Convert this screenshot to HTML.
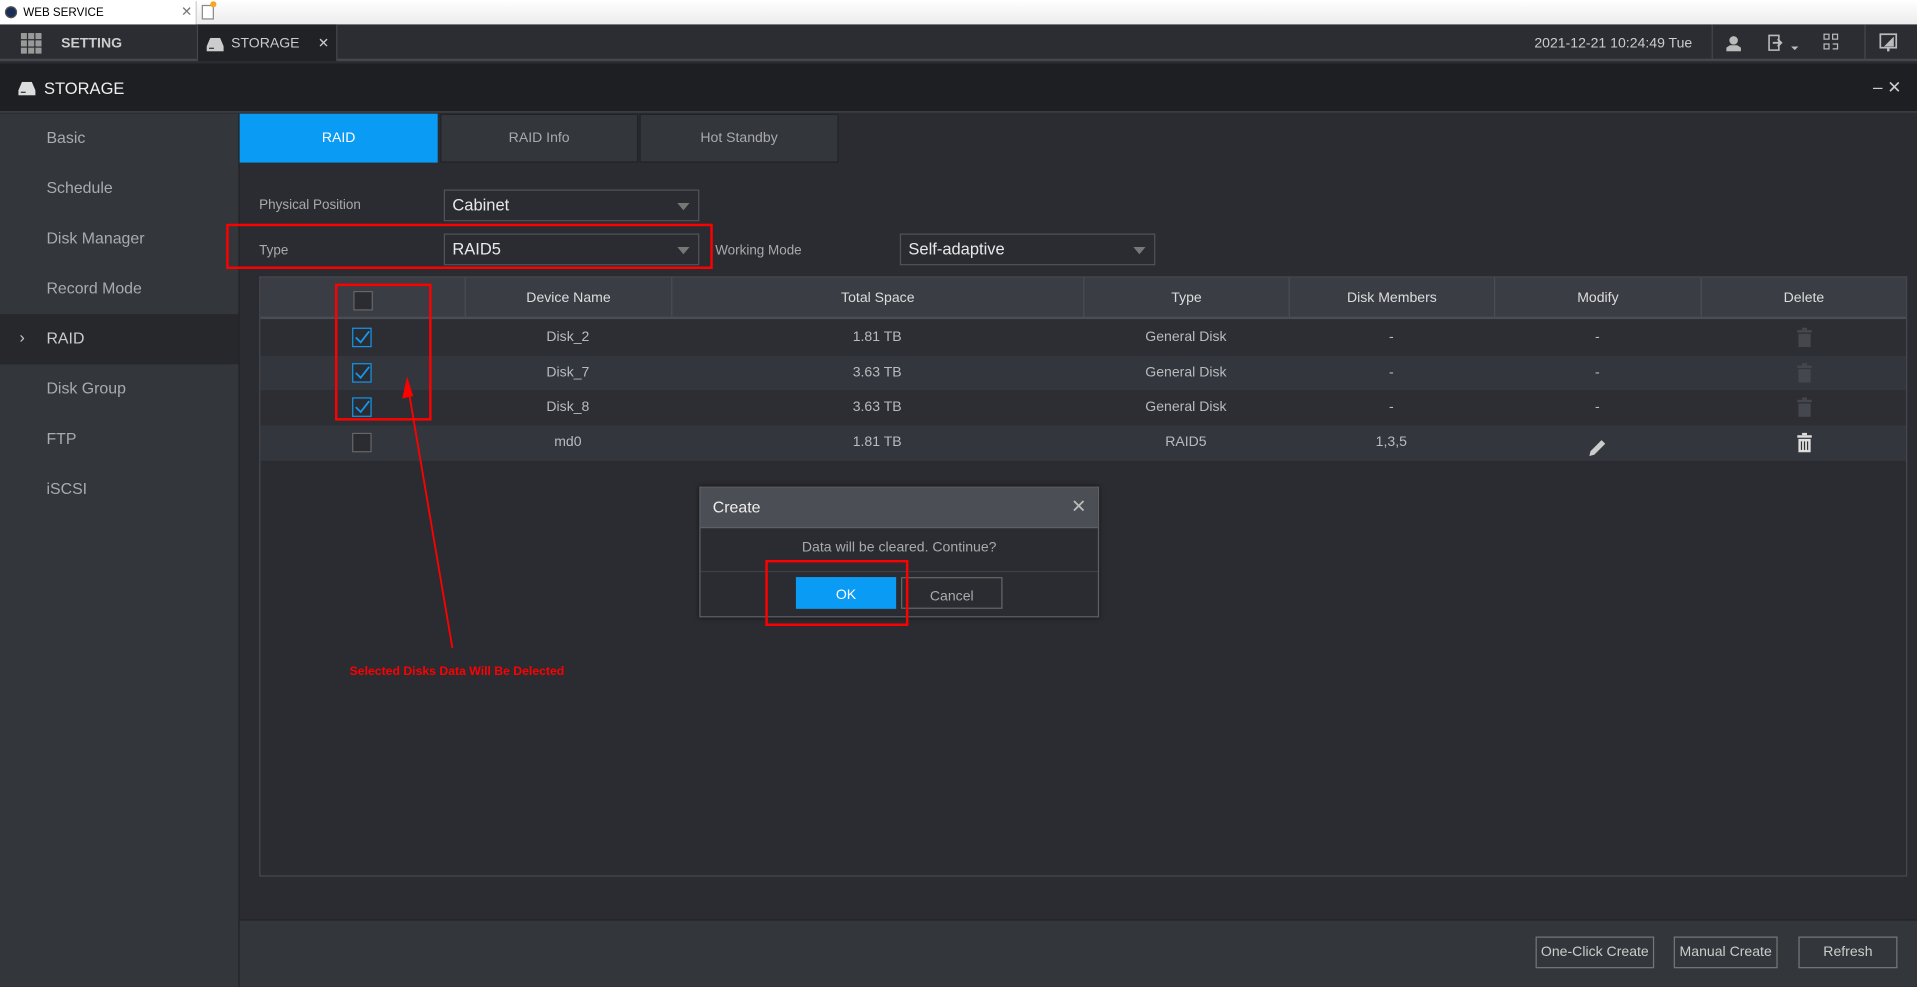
<!DOCTYPE html>
<html><head><meta charset="utf-8"><style>
*{box-sizing:border-box;margin:0;padding:0}
html,body{width:1917px;height:987px;overflow:hidden;background:#2a2c31;font-family:"Liberation Sans",Arial,sans-serif}
#s{position:absolute;left:0;top:0;width:1568px;height:807px;transform:scale(1.22258);transform-origin:0 0;background:#2a2c31;color:#bbb;font-size:12px}
.a{position:absolute}
.c{display:flex;align-items:center;justify-content:center}
.side div.it{position:absolute;left:0;width:195px;height:41px;line-height:40px;padding-left:38px;font-size:13px;color:#a9abae}
.sel{position:absolute;height:26px;border:1px solid #50535a;background:#2a2c31;color:#e8e8e8;font-size:13.5px;line-height:24px;padding-left:6px}
.sel:after{content:"";position:absolute;right:7px;top:10px;border:5px solid transparent;border-top:6px solid #777;}
.th{position:absolute;top:0;height:34px;line-height:34px;text-align:center;color:#ddd;font-size:11.5px;border-right:1px solid #4a4d54}
.td{position:absolute;height:29px;line-height:30px;text-align:center;color:#b9bbbe;font-size:11.5px}
.cb{position:absolute;width:16px;height:16px;border:1px solid #666;background:#2a2c31}
.cb.on{border-color:#1596e8}
.btn{position:absolute;height:26px;border:1px solid #777;color:#ccc;font-size:11.5px;line-height:25px;text-align:center}
</style></head><body><div id="s">
<div class="a" style="left:0;top:0;width:1568px;height:20px;background:linear-gradient(#fff,#ececec)"></div>
<div class="a" style="left:0;top:1px;width:161px;height:19px;background:#fff;border-right:1px solid #ccc"></div>
<div class="a" style="left:4px;top:5px;width:10px;height:10px;border-radius:50%;background:#1b2e55;border:1px solid #555"></div>
<div class="a" style="left:19px;top:5px;font-size:9.5px;color:#000">WEB SERVICE</div>
<div class="a" style="left:148px;top:3px;font-size:11px;color:#777">✕</div>
<div class="a" style="left:165px;top:4px;width:10px;height:12px;border:1px solid #888;background:#fff"></div>
<div class="a" style="left:172px;top:1px;width:5px;height:5px;background:#f5a623;border-radius:50%"></div>
<div class="a" style="left:0;top:20px;width:1568px;height:30px;background:#2b2d32;border-bottom:2px solid #45474c"></div>
<svg class="a" style="left:17px;top:27px" width="17" height="17"><g fill="#999"><rect x="0" y="0" width="5" height="5"/><rect x="6" y="0" width="5" height="5"/><rect x="12" y="0" width="5" height="5"/><rect x="0" y="6" width="5" height="5"/><rect x="6" y="6" width="5" height="5"/><rect x="12" y="6" width="5" height="5"/><rect x="0" y="12" width="5" height="5"/><rect x="6" y="12" width="5" height="5"/><rect x="12" y="12" width="5" height="5"/></g></svg>
<div class="a" style="left:50px;top:30px;font-size:11.5px;font-weight:bold;color:#ccc">SETTING</div>
<div class="a" style="left:161px;top:20px;width:115px;height:30px;background:#202226;border-left:1px solid #45474c;border-right:1px solid #45474c"></div>
<svg class="a" style="left:169px;top:31px" width="14" height="11"><path d="M3 0h8l3 7v4H0V7z" fill="#ccc"/><rect x="2" y="8" width="4" height="1" fill="#333"/></svg>
<div class="a" style="left:189px;top:30px;font-size:11.5px;color:#ccc">STORAGE</div>
<div class="a" style="left:260px;top:29px;font-size:11px;color:#ccc">✕</div>
<div class="a" style="left:1255px;top:30px;font-size:11.5px;color:#ccc">2021-12-21 10:24:49 Tue</div>
<div class="a" style="left:1400px;top:20px;width:1px;height:30px;background:#45474c"></div>
<div class="a" style="left:1525px;top:20px;width:1px;height:30px;background:#45474c"></div>
<svg class="a" style="left:1412px;top:29px" width="12" height="13"><circle cx="6" cy="4" r="3.5" fill="#bbb"/><path d="M0 13v-3l3-2h6l3 2v3z" fill="#bbb"/></svg>
<svg class="a" style="left:1446px;top:28px" width="26" height="14"><path d="M1 1h8v12H1z" fill="none" stroke="#bbb" stroke-width="1.3"/><path d="M4 7h6M8 4l3 3-3 3" fill="none" stroke="#bbb" stroke-width="1.5"/><path d="M19 10l3 3 3-3z" fill="#bbb"/></svg>
<svg class="a" style="left:1491px;top:27px" width="13" height="15" fill="none" stroke="#bbb"><rect x="1" y="1" width="4" height="4"/><rect x="8" y="1" width="4" height="4"/><rect x="1" y="9" width="4" height="4"/><path d="M8 9h4v4H8"/></svg>
<svg class="a" style="left:1537px;top:27px" width="16" height="16"><rect x="1" y="1" width="13" height="11" fill="none" stroke="#bbb" stroke-width="1.4"/><path d="M12 3L4 11h8z" fill="#bbb"/><rect x="6.5" y="12" width="2" height="3" fill="#bbb"/></svg>
<div class="a" style="left:0;top:52px;width:1568px;height:40px;background:#1d1f22;border-bottom:1px solid #45474c"></div>
<svg class="a" style="left:15px;top:67px" width="14" height="11"><path d="M3 0h8l3 7v4H0V7z" fill="#ddd"/><rect x="2" y="8" width="4" height="1" fill="#333"/></svg>
<div class="a" style="left:36px;top:65px;font-size:13.5px;color:#eee">STORAGE</div>
<div class="a" style="left:1532px;top:63px;font-size:14px;color:#ccc">– ✕</div>
<div class="a side" style="left:0;top:93px;width:196px;height:714px;background:#33363b;border-right:1px solid #202226">
<div class="it" style="top:0">Basic</div>
<div class="it" style="top:41px">Schedule</div>
<div class="it" style="top:82px">Disk Manager</div>
<div class="it" style="top:123px">Record Mode</div>
<div class="it" style="top:164px;background:#26282c;color:#ccc">RAID</div>
<div class="a" style="left:16px;top:175px;font-size:13px;color:#ccc">›</div>
<div class="it" style="top:205px">Disk Group</div>
<div class="it" style="top:246px">FTP</div>
<div class="it" style="top:287px">iSCSI</div>
</div>
<div class="a c" style="left:196px;top:93px;width:162px;height:40px;background:#0a9bf5;color:#fff;font-size:11.5px">RAID</div>
<div class="a c" style="left:360px;top:93px;width:162px;height:40px;background:#33363b;border:1px solid #202226;color:#aaa;font-size:11.5px">RAID Info</div>
<div class="a c" style="left:523px;top:93px;width:163px;height:40px;background:#33363b;border:1px solid #202226;color:#aaa;font-size:11.5px">Hot Standby</div>
<div class="a" style="left:212px;top:162px;font-size:11px;color:#aaa">Physical Position</div>
<div class="sel" style="left:363px;top:155px;width:209px">Cabinet</div>
<div class="a" style="left:212px;top:199px;font-size:11px;color:#aaa">Type</div>
<div class="sel" style="left:363px;top:191px;width:209px">RAID5</div>
<div class="a" style="left:585px;top:199px;font-size:11px;color:#aaa">Working Mode</div>
<div class="sel" style="left:736px;top:191px;width:209px">Self-adaptive</div>
<div class="a" style="left:212px;top:226px;width:1348px;height:491px;border:1px solid #46494f;background:#2a2c31">
<div class="a" style="left:0;top:0;width:1346px;height:34px;background:#3a3d44;border-bottom:2px solid #4a4d54"></div>
<div class="th" style="left:0;width:168px"></div>
<div class="th" style="left:168px;width:169px">Device Name</div>
<div class="th" style="left:337px;width:337px">Total Space</div>
<div class="th" style="left:674px;width:168px">Type</div>
<div class="th" style="left:842px;width:168px">Disk Members</div>
<div class="th" style="left:1010px;width:169px">Modify</div>
<div class="th" style="left:1179px;width:167px;border:0">Delete</div>
<div class="cb" style="left:76px;top:11px"></div>
<div class="a" style="left:0;top:35px;width:1346px;height:29px;background:#2c2e33"></div>
<div class="a" style="left:0;top:64px;width:1346px;height:28px;background:#33363c"></div>
<div class="a" style="left:0;top:92px;width:1346px;height:29px;background:#2c2e33"></div>
<div class="a" style="left:0;top:121px;width:1346px;height:29px;background:#33363c"></div>
</div>
<div class="a" style="left:212px;top:261px;width:1348px">
<div class="td" style="left:168px;width:169px;top:0">Disk_2</div><div class="td" style="left:337px;width:337px;top:0">1.81 TB</div><div class="td" style="left:674px;width:168px;top:0">General Disk</div><div class="td" style="left:842px;width:168px;top:0">-</div><div class="td" style="left:1010px;width:169px;top:0">-</div>
<div class="td" style="left:168px;width:169px;top:29px">Disk_7</div><div class="td" style="left:337px;width:337px;top:29px">3.63 TB</div><div class="td" style="left:674px;width:168px;top:29px">General Disk</div><div class="td" style="left:842px;width:168px;top:29px">-</div><div class="td" style="left:1010px;width:169px;top:29px">-</div>
<div class="td" style="left:168px;width:169px;top:57px">Disk_8</div><div class="td" style="left:337px;width:337px;top:57px">3.63 TB</div><div class="td" style="left:674px;width:168px;top:57px">General Disk</div><div class="td" style="left:842px;width:168px;top:57px">-</div><div class="td" style="left:1010px;width:169px;top:57px">-</div>
<div class="td" style="left:168px;width:169px;top:86px">md0</div><div class="td" style="left:337px;width:337px;top:86px">1.81 TB</div><div class="td" style="left:674px;width:168px;top:86px">RAID5</div><div class="td" style="left:842px;width:168px;top:86px">1,3,5</div>
</div>
<div class="cb on" style="left:288px;top:268px"><svg width="14" height="14" style="position:absolute;left:0;top:0"><path d="M2 7l4 4 7-9" fill="none" stroke="#1596e8" stroke-width="1.5"/></svg></div>
<div class="cb on" style="left:288px;top:297px"><svg width="14" height="14" style="position:absolute;left:0;top:0"><path d="M2 7l4 4 7-9" fill="none" stroke="#1596e8" stroke-width="1.5"/></svg></div>
<div class="cb on" style="left:288px;top:325px"><svg width="14" height="14" style="position:absolute;left:0;top:0"><path d="M2 7l4 4 7-9" fill="none" stroke="#1596e8" stroke-width="1.5"/></svg></div>
<div class="cb" style="left:288px;top:354px"></div>
<svg class="a" style="left:1470px;top:268px" width="12" height="16"><g fill="#44474d"><rect x="4" y="0" width="4" height="2"/><rect x="0" y="2" width="12" height="2"/><rect x="1" y="5" width="10" height="11"/></g></svg>
<svg class="a" style="left:1470px;top:297px" width="12" height="16"><g fill="#44474d"><rect x="4" y="0" width="4" height="2"/><rect x="0" y="2" width="12" height="2"/><rect x="1" y="5" width="10" height="11"/></g></svg>
<svg class="a" style="left:1470px;top:325px" width="12" height="16"><g fill="#44474d"><rect x="4" y="0" width="4" height="2"/><rect x="0" y="2" width="12" height="2"/><rect x="1" y="5" width="10" height="11"/></g></svg>
<svg class="a" style="left:1470px;top:354px" width="12" height="16"><g fill="#ddd"><rect x="4" y="0" width="4" height="2"/><rect x="0" y="2" width="12" height="2"/><rect x="1" y="5" width="10" height="11"/></g><g fill="#333"><rect x="3" y="7" width="1" height="7"/><rect x="5.5" y="7" width="1" height="7"/><rect x="8" y="7" width="1" height="7"/></g></svg>
<svg class="a" style="left:1299px;top:358px" width="16" height="16"><path d="M1 15l1-4 9-9 3 3-9 9z" fill="#ccc"/></svg>
<div class="a" style="left:196px;top:752px;width:1372px;height:55px;background:#33363b;border-top:1px solid #202226"></div>
<div class="btn" style="left:1256px;top:766px;width:97px">One-Click Create</div>
<div class="btn" style="left:1369px;top:766px;width:85px">Manual Create</div>
<div class="btn" style="left:1471px;top:766px;width:81px">Refresh</div>
<div class="a" style="left:572px;top:398px;width:327px;height:107px;background:#2a2c31;border:1px solid #5d6066;box-shadow:0 0 4px rgba(0,0,0,.6)"></div>
<div class="a" style="left:573px;top:399px;width:325px;height:33px;background:#4b4e54;border-bottom:1px solid #5d6066"></div>
<div class="a" style="left:583px;top:407px;font-size:13px;color:#eee">Create</div>
<div class="a" style="left:876px;top:405px;font-size:15px;color:#bbb">✕</div>
<div class="a" style="left:573px;top:442px;width:325px;text-align:center;font-size:11.5px;color:#aaa">Data will be cleared. Continue?</div>
<div class="a" style="left:573px;top:467px;width:325px;height:1px;background:#3e4046"></div>
<div class="a c" style="left:651px;top:472px;width:82px;height:26px;background:#0a9bf5;color:#fff;font-size:11.5px;padding-top:3px">OK</div>
<div class="btn" style="left:737px;top:472px;width:83px;border-color:#666;color:#aaa;padding-top:3px">Cancel</div>
<div class="a" style="left:185px;top:183px;width:398px;height:37px;border:2px solid #f00"></div>
<div class="a" style="left:274px;top:232px;width:79px;height:112px;border:2px solid #f00"></div>
<div class="a" style="left:626px;top:458px;width:117px;height:54px;border:2px solid #f00"></div>
<svg class="a" style="left:320px;top:300px" width="60" height="240"><path d="M50 230L14 18" stroke="#f00" stroke-width="1.5"/><path d="M13 8L9 26 18 24z" fill="#f00"/></svg>
<div class="a" style="left:286px;top:544px;font-size:10px;font-weight:bold;color:#f00">Selected Disks Data Will Be Delected</div>
</div></body></html>
